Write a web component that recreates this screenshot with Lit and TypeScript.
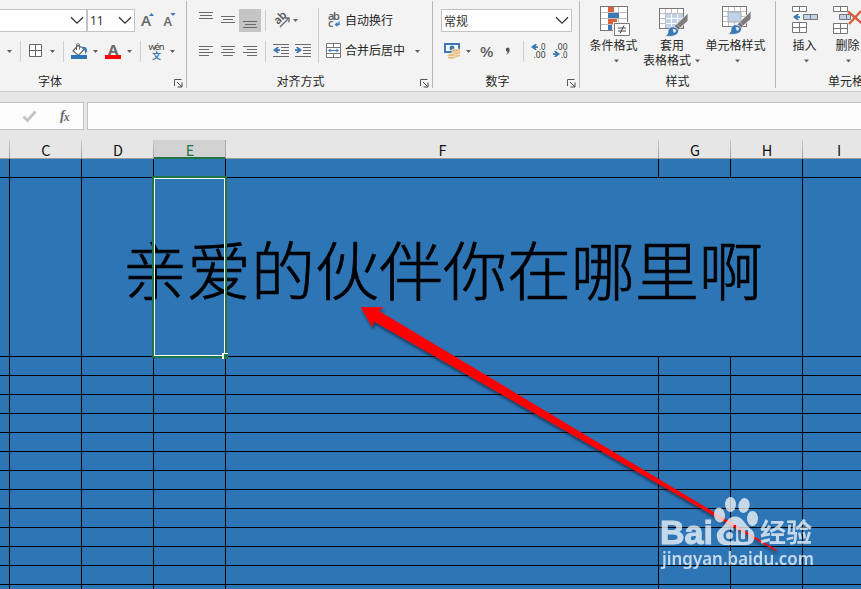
import { LitElement, html, svg, css, type TemplateResult, type SVGTemplateResult } from "lit";
import { customElement, property } from "lit/decorators.js";

const GRAY = "#6a6a6a";
const BLUE = "#3c78b4";

/** Pieces of icon artwork; all coordinates are window pixels. */
const bar = (x: number, y: number, w: number, h = 1, fill = GRAY) =>
  svg`<rect x=${x} y=${y} width=${w} height=${h} fill=${fill} shape-rendering="crispEdges"/>`;
const caret = (x: number, y: number) =>
  svg`<path d="M${x - 2.5} ${y - 1}h5l-2.5 3z" fill="#606060"/>`;
const divider = (x: number, y: number, h: number) => bar(x, y, 1, h, "#cfcfcf");
const lines = (spec: number[][]) => spec.map(([x, y, w]) => bar(x, y, w));
const arrowLeft = (x: number, y: number) =>
  svg`<path d="M${x} ${y}l4-3h2l-1.6 2.2H${x + 7}v1.7h-2.6l1.6 2.1h-2z" fill=${BLUE}/>`;
const arrowRight = (x: number, y: number) =>
  svg`<path d="M${x} ${y}l-4-3h-2l1.6 2.2h-2.6v1.7h2.6l-1.6 2.1h2z" fill=${BLUE}/>`;

/** A slice of a toolbar row; slices sit side by side. */
const slice = (x: number, y: number, w: number, h: number, body: unknown) =>
  html`<svg class="slice" width=${w} height=${h} viewBox="${x} ${y} ${w} ${h}">${body}</svg>`;

const launcher = (x: number, y: number) => svg`
  <path d="M${x + 0.5} ${y + 7}v-6.500h7" fill="none" stroke="#555"/>
  <path d="M${x + 3} ${y + 3}l4.500 4.500M${x + 8} ${y + 3.500}v4.500h-4.500" fill="none" stroke="#444"/>`;

const brush = (x: number, y: number) => svg`
  <path d="M${x + 28} ${y}v8l-8 7-4-3.500z" fill="#7d7d7d" stroke="#f3f3f3" stroke-width=".8"/>
  <path d="M${x + 16.5} ${y + 11}l4 4-2.500 2.500-4-3.500z" fill="#6c6c6c" stroke="#f3f3f3" stroke-width=".5"/>
  <path d="M${x + 14} ${y + 14}c-3-1-6 1-6 4.500 0 2.500-1.500 4-3.500 4.500 6 1 13 .5 14-4.500.3-2-1.500-4-4.500-4.500z" fill=${BLUE} stroke="#f3f3f3" stroke-width=".8"/>
  <path d="M${x + 12.5} ${y + 16.5}c2-1.500 4 0 3.500 2l-2 1.500z" fill="#e8eff6"/>`;

@customElement("excel-combo")
export class ExcelCombo extends LitElement {
  @property() value = "";
  static styles = css`
    :host { display: flex; align-items: center; justify-content: space-between; box-sizing: border-box;
      height: 23px; border: 1px solid #c3c3c3; background: #fff; padding: 0 2px 0 2px;
      font: 12px "Noto Sans", "Noto Sans CJK SC", sans-serif; color: #333; }
    svg { display: block; }
  `;
  render() {
    return html`<span>${this.value}</span>
      <svg width="14" height="9" viewBox="0 0 14 9"><path d="M1 1.200l6 6 6-6" fill="none" stroke="#333" stroke-width="1.300"/></svg>`;
  }
}

@customElement("excel-ribbon")
export class ExcelRibbon extends LitElement {
  static styles = css`
    :host { display: flex; height: 92px; box-sizing: border-box; background: #f3f3f3; border-bottom: 1px solid #cdcdcd;
      overflow: hidden; font: 12px "Noto Sans", "Noto Sans CJK SC", sans-serif; color: #262626; }
    .group { flex: none; box-sizing: border-box; display: grid; grid-template-rows: 28px 30px 24px;
      padding-top: 6px; height: 88px; border-right: 1px solid transparent;
      border-image: linear-gradient(to bottom, transparent 2px, #b8b8b8 2px) 1; }
    .font { width: 187px; }
    .align { width: 246px; }
    .number { width: 147px; }
    .style { width: 196px; grid-template-rows: 58px 24px; }
    .cells { width: 120px; grid-template-rows: 58px 24px; border: 0; }
    .row { display: flex; align-items: flex-start; white-space: nowrap; }
    .foot { display: flex; justify-content: center; position: relative; line-height: 18px; padding-top: 9px; height: 18px; }
    .font .foot { padding-right: 86px; }
    .align .foot { padding-right: 18px; }
    .number .foot { padding-right: 17px; }
    .cells .foot { justify-content: flex-start; padding-left: 52px; }
    .corner { position: absolute; right: 3px; top: 15px; }
    .slice { display: block; flex: none; }
    .face { margin: 3px 0 0 -1px; width: 88px; }
    .size { margin: 3px 0 0 0; width: 48px; }
    .format { margin: 3px 0 0 8px; width: 131px; }
    .word { width: 60px; line-height: 30px; }
    .word.merge { line-height: 34px; }
    .tall { display: flex; flex-direction: column; align-items: center; flex: none; line-height: 15px; text-align: center; white-space: nowrap; }
    .w1 { width: 67px; margin-right: -4px; }
    .w2 { width: 58px; }
    .w3 { width: 69px; }
    .w4 { width: 57px; }
    .w5 { width: 29px; }
  `;

  private group(name: string, label: string, rows: TemplateResult, corner?: [number, number]) {
    return html`<section class="group ${name}">${rows}
      <div class="foot"><span>${label}</span>
        ${corner ? html`<svg class="corner" width="9" height="9" viewBox="${corner[0]} ${corner[1]} 9 9">${launcher(corner[0], corner[1])}</svg>` : ""}
      </div></section>`;
  }

  private fontRows() {
    return html`
      <div class="row">
        <excel-combo class="face"></excel-combo>
        <excel-combo class="size" value="11"></excel-combo>
        ${slice(135, 6, 51, 28, svg`
          <text x="141" y="26" font-size="15" font-weight="600" fill=${GRAY}>A</text>
          <path d="M149 16l2.500-3 2.500 3z" fill=${BLUE}/>
          <text x="163.500" y="26" font-size="12.500" font-weight="600" fill=${GRAY}>A</text>
          <path d="M170.500 13h5l-2.500 3z" fill=${BLUE}/>`)}
      </div>
      <div class="row">
        ${slice(0, 34, 64, 30, svg`${caret(9.5, 51)}${divider(20, 41, 21)}
          <path d="M29.500 44.500h12v12h-12zM35.500 44.500v12M29.500 50.500h12" fill="#fff" stroke="#666"/>${caret(52.5, 51)}${divider(63, 41, 21)}`)}
        ${slice(64, 34, 77, 30, svg`
          <path d="M78 45.500l-5 5.500 5.500 4.500 6-6.500z" fill="#fff" stroke="#666" stroke-width="1.200"/>
          <path d="M76.500 50v-5.500q1.500-2 3 0v5" fill="none" stroke="#666"/>
          <path d="M82 47c3-1 5 1 5 3.500 0 2-1 3-2 3.500.5-3-.5-4-2-5z" fill=${BLUE}/>
          ${bar(71, 55, 16, 4, "#2e75b6")}${caret(95.5, 51)}
          <text x="108" y="55" font-size="15" font-weight="700" fill=${GRAY}>A</text>
          ${bar(105, 55, 16, 4, "#ff0000")}${caret(129.5, 51)}${divider(140, 41, 21)}`)}
        ${slice(141, 34, 45, 30, svg`
          <text x="148.500" y="50" font-size="9.500" textLength="16" fill="#444">wén</text>
          <text x="152" y="58.500" font-size="9" font-weight="700" fill=${BLUE}>文</text>${caret(172.5, 51)}`)}
      </div>`;
  }

  private alignRows() {
    return html`
      <div class="row">
        ${slice(187, 6, 132, 28, svg`
          ${lines([[199, 12, 14], [200, 15, 12], [199, 18, 14], [221, 16, 14], [223, 19, 10], [221, 22, 14]])}
          ${bar(239, 9, 22, 23, "#c5c5c5")}
          ${lines([[243, 21, 14], [245, 24, 11], [243, 27, 14]])}
          ${divider(265, 10, 21)}
          <text transform="translate(278 25) rotate(-45)" font-size="11" font-weight="600" fill="#555">ab</text>
          <path d="M280 27l8-8M284.500 18h4.500v4.500" fill="none" stroke="#666" stroke-width="1.300"/>
          ${caret(295.5, 20)}${divider(318, 8, 26)}`)}
        ${slice(319, 6, 26, 28, svg`
          <text x="328" y="20" font-size="11" font-weight="600" fill="#666" textLength="12">ab</text>
          <text x="328" y="27" font-size="10.500" font-weight="600" fill="#666">c</text>
          <path d="M339 21.500v3h-3" fill="none" stroke=${BLUE} stroke-width="1.300"/><path d="M337.500 22v5l-3-2.500z" fill=${BLUE}/>`)}
        <span class="word">自动换行</span>
      </div>
      <div class="row">
        ${slice(187, 34, 132, 30, svg`
          ${lines([[199, 46, 14], [199, 49, 10], [199, 52, 14], [199, 55, 10],
            [221, 46, 14], [223, 49, 10], [221, 52, 14], [223, 55, 10],
            [243, 46, 14], [247, 49, 10], [243, 52, 14], [247, 55, 10]])}
          ${divider(265, 41, 21)}
          ${lines([[273, 44, 16], [281, 47, 8], [281, 50, 8], [281, 53, 8], [273, 56, 16],
            [295, 44, 16], [303, 47, 8], [303, 50, 8], [303, 53, 8], [295, 56, 16]])}
          ${arrowLeft(273, 50)}${arrowRight(302, 50)}${divider(318, 34, 29)}`)}
        ${slice(319, 34, 26, 30, svg`
          <path d="M326.500 43.500h14v14h-14zM326.500 47.500h14M326.500 53.500h14M333.500 43.500v4M333.500 53.500v4" fill="#fff" stroke="#777"/>
          <path d="M329 50.500h9" stroke=${BLUE}/><path d="M328 50.500l2.500-2v4zM339 50.500l-2.500-2v4z" fill=${BLUE}/>`)}
        <span class="word merge">合并后居中</span>
        ${slice(405, 34, 27, 30, caret(417.5, 51))}
      </div>`;
  }

  private numberRows() {
    return html`
      <div class="row"><excel-combo class="format" value="常规"></excel-combo></div>
      <div class="row">
        ${slice(433, 34, 146, 30, svg`
          <path d="M445 44h14v8h-14z" fill="#fff" stroke=${BLUE} stroke-width="2"/>
          <circle cx="452" cy="48" r="2.500" fill=${BLUE}/>
          <g fill="#e8bd7c" stroke="#f3f3f3" stroke-width=".6"><ellipse cx="456" cy="55.500" rx="4.500" ry="1.800"/><ellipse cx="456" cy="53" rx="4.500" ry="1.800"/><ellipse cx="456" cy="50.500" rx="4.500" ry="1.800"/>
          <ellipse cx="451.500" cy="57.500" rx="4" ry="1.600"/><ellipse cx="451.500" cy="55" rx="4" ry="1.600"/></g>
          ${caret(468.5, 51)}
          <text x="480" y="57" font-size="15" font-weight="500" fill="#555" textLength="13.500" lengthAdjust="spacingAndGlyphs">%</text>
          <path d="M507.500 47.500a2.200 2.200 0 0 1 2.200 2.300q0 3.500-3.700 5.200 1.700-1.700 1.600-3.200a2.200 2.200 0 0 1-.1-4.300z" fill="#555"/>
          ${divider(523, 41, 21)}
          <g font-size="9" fill="#333"><text x="539" y="50" textLength="6.500" lengthAdjust="spacingAndGlyphs">.0</text><text x="533.500" y="57.500" textLength="12" lengthAdjust="spacingAndGlyphs">.00</text>
          <text x="555.500" y="50" textLength="12" lengthAdjust="spacingAndGlyphs">.00</text><text x="561" y="57.500" textLength="6.500" lengthAdjust="spacingAndGlyphs">.0</text></g>
          ${arrowLeft(531, 47)}${arrowRight(560, 54)}`)}
      </div>`;
  }

  private tableGrid(x: number, y: number, cols: number, rows: number, cw: number, ch: number): SVGTemplateResult {
    const v = Array.from({ length: cols - 1 }, (_, i) => bar(x + (i + 1) * cw, y + 1, 1, rows * ch - 1, "#bdbdbd"));
    const h = Array.from({ length: rows - 1 }, (_, i) => bar(x + 1, y + (i + 1) * ch, cols * cw - 1, 1, "#bdbdbd"));
    return svg`<rect x=${x + 0.5} y=${y + 0.5} width=${cols * cw} height=${rows * ch} fill="#fff" stroke="#777"/>${v}${h}`;
  }

  private styleRows() {
    return html`<div class="row">
      <div class="tall w1">
        ${slice(580, 6, 67, 32, svg`
          ${this.tableGrid(600, 6, 3, 4, 9, 6)}
          ${bar(608, 7, 6, 5, "#d9603b")}${bar(608, 13, 11, 5, BLUE)}${bar(608, 19, 9, 5, "#d9603b")}${bar(608, 25, 4, 5, BLUE)}
          <path d="M614.500 23.500h15v12h-15z" fill="#fff" stroke="#f3f3f3" stroke-width="3"/>
          <path d="M614.500 23.500h15v12h-15z" fill="#fff" stroke="#777"/>
          <path d="M618 28h8M618 31h8M624 25.500l-4 8" stroke="#444" fill="none"/>`)}
        <span>条件格式</span>${slice(580, 53, 67, 10, caret(616.5, 60.5))}
      </div>
      <div class="tall w2">
        ${slice(643, 6, 58, 32, svg`${this.tableGrid(659, 8, 4, 4, 6, 5)}
          ${bar(666, 14, 17, 14, "#c0d2e8")}${bar(671, 14, 1, 14, "#fff")}${bar(677, 14, 1, 14, "#fff")}${bar(666, 18, 17, 1, "#fff")}${bar(666, 23, 17, 1, "#fff")}
          ${brush(660, 13)}`)}
        <span>套用</span>
        <div class="row"><span>表格格式</span>${slice(691, 53, 10, 15, caret(697.5, 60.5))}</div>
      </div>
      <div class="tall w3">
        ${slice(701, 6, 69, 32, svg`${this.tableGrid(722, 6, 4, 4, 6, 5)}
          <rect x="728" y="12" width="13" height="10" fill="#c0d2e8" stroke="#aaa"/>
          ${brush(723, 11)}`)}
        <span>单元格样式</span>${slice(701, 53, 69, 10, caret(737.5, 60.5))}
      </div>
    </div>`;
  }

  private cellRows() {
    return html`<div class="row">
      <div class="tall w4">
        ${slice(776, 6, 57, 32, svg`
          <path d="M792.500 6.500h14v5h-14zM799.500 6.500v5M792.500 22.500h14v10h-14zM792.500 27.500h14M799.500 22.500v10" fill="#fff" stroke="#777"/>
          <path d="M803.500 14.500h14v5h-14zM810.500 14.500v5" fill="#c0d2e8" stroke="#777"/>${arrowLeft(793, 17)}`)}
        <span>插入</span>${slice(776, 53, 57, 10, caret(806.5, 60.5))}
      </div>
      <div class="tall w5">
        ${slice(833, 6, 29, 32, svg`
          <path d="M833.500 6.500h14v5h-14zM840.500 6.500v5M833.500 23.500h14v10h-14zM833.500 28.500h14M840.500 23.500v10" fill="#fff" stroke="#777"/>
          <path d="M839.500 14.500h11v5h-11zM846.500 14.500v5" fill="#c0d2e8" stroke="#777"/>
          <path d="M848 11.500l14 12M861 11l-12 13" stroke="#d9603b" stroke-width="2.400" fill="none"/>`)}
        <span>删除</span>${slice(833, 53, 29, 10, caret(848.5, 60.5))}
      </div>
    </div>`;
  }

  render() {
    return html`
      ${this.group("font", "字体", this.fontRows(), [175, 79])}
      ${this.group("align", "对齐方式", this.alignRows(), [421, 79])}
      ${this.group("number", "数字", this.numberRows(), [568, 79])}
      ${this.group("style", "样式", this.styleRows())}
      ${this.group("cells", "单元格", this.cellRows())}`;
  }
}

@customElement("excel-sheet")
export class ExcelSheet extends LitElement {
  static styles = css`
    :host { display: block; position: relative; }
    .grid { display: grid; grid-template-columns: 10px 72px 72px 72px 433px 72px 72px 72px; }
    .heads { height: 19px; background: #e6e6e6; }
    .head { box-sizing: border-box; height: 19px; border-bottom: 1px solid #999; border-right: 1px solid transparent;
      border-image: linear-gradient(to bottom, #d0d0d0, #999) 1; border-top: 0; border-left: 0;
      padding-left: 1px; font: 14.5px/20px "Noto Sans CJK SC", sans-serif; text-align: center; color: #111; }
    .head.on { background: #d2d2d2; border-image: none; border-right-color: #aaa; border-bottom: 2px solid #217346; color: #217346; }
    .row { height: 19px; }
    .row.merged { height: 179px; }
    .cell { box-sizing: border-box; border-right: 1px solid #000; border-bottom: 1px solid #000; background: #2e75b6; }
    .title { grid-column: 3 / 8; display: flex; align-items: center; justify-content: center; white-space: nowrap; padding-left: 2px;
      font: 64px/80px "Noto Sans CJK SC", sans-serif; font-weight: 300; color: #000; -webkit-text-stroke: .7px #000; }
    .selection { position: absolute; left: 152px; top: 36px; width: 75px; height: 182px; box-sizing: border-box;
      border: 2px solid #217346; outline: 1px solid #fff; outline-offset: -3px; }
    .handle { position: absolute; left: 222px; top: 213px; width: 6px; height: 6px; box-sizing: border-box;
      background: #217346; border-left: 2px solid #fff; border-top: 1px solid #fff; }
    .overlay { position: absolute; left: 0; top: 0; }
  `;
  render() {
    const heads = ["", "C", "D", "E", "F", "G", "H", "I"];
    const plain = html`<div class="grid row">${heads.map(() => html`<div class="cell"></div>`)}</div>`;
    return html`
      <div class="grid heads">${heads.map((h) => html`<div class="head ${h === "E" ? "on" : ""}">${h}</div>`)}</div>
      ${plain}
      <div class="grid row merged">
        <div class="cell"></div><div class="cell"></div>
        <div class="cell title">亲爱的伙伴你在哪里啊</div>
        <div class="cell"></div>
      </div>
      ${Array.from({ length: 13 }, () => plain)}
      <div class="selection"></div><div class="handle"></div>
      <svg class="overlay" width="861" height="449" viewBox="0 140 861 449">
        <defs>
          <filter id="shade" x="-5%" y="-5%" width="110%" height="115%"><feDropShadow dx="1" dy="3" stdDeviation="1.500" flood-color="#000" flood-opacity=".5"/></filter>
          <mask id="du" maskUnits="userSpaceOnUse" x="700" y="500" width="80" height="60">
            <rect x="700" y="500" width="80" height="60" fill="#fff"/>
            <g fill="none" stroke="#000" stroke-width="2.600"><circle cx="729.500" cy="535.500" r="4.800"/><path d="M734.800 525v16.500M739.500 530v7.500q0 3.200 3.500 3.200t3.500-3.200v-7.500M746.800 530v11.500"/></g>
          </mask>
        </defs>
        <path d="M360.500 307l23.500.3-5.300 3.400L777 550l-.8 1.200L374 321.500l-1.700 5.500z" fill="#f00" filter="url(#shade)"/>
        <g fill="#fff" opacity=".73" font-family="'Noto Sans', 'Noto Sans CJK SC', sans-serif">
          <text x="660" y="543.500" font-family="'Liberation Sans', sans-serif" font-size="34" font-weight="700" textLength="53" lengthAdjust="spacingAndGlyphs" stroke="#fff" stroke-width="1">Bai</text>
          <ellipse cx="719.500" cy="515" rx="5.500" ry="7.500" transform="rotate(-8 719.500 515)"/>
          <ellipse cx="730.500" cy="504.500" rx="5.500" ry="7.500"/>
          <ellipse cx="744" cy="505.500" rx="5.500" ry="7.500" transform="rotate(12 744 505.500)"/>
          <ellipse cx="752.500" cy="518.500" rx="5.500" ry="7.500"/>
          <path mask="url(#du)" d="M735 516.500c-7 0-8 6-12 10-4 3-7 6-6 11s4 7.500 9 7.500h20c5 0 8.500-3.500 8.500-8.500s-3-7-6.500-10c-4-4-6-10-13-10z"/>
          <text x="760" y="542" font-size="26" font-weight="700" textLength="52">经验</text>
          <text x="662" y="564.500" font-size="18" font-weight="600" textLength="152" lengthAdjust="spacingAndGlyphs">jingyan.baidu.com</text>
        </g>
      </svg>`;
  }
}

@customElement("app-root")
export class AppRoot extends LitElement {
  static styles = css`
    :host { display: flex; flex-direction: column; width: 861px; height: 589px; overflow: hidden; background: #e6e6e6; }
    .formula { display: flex; gap: 3px; height: 28px; margin: 10px 0; flex: none; }
    .tools, .entry { box-sizing: border-box; background: #fdfdfd; border: 1px solid #c3c3c3; }
    .tools { width: 84px; border-left: 0; display: flex; }
    .entry { flex: 1; border-right: 0; }
    svg { display: block; }
    excel-ribbon, excel-sheet { flex: none; }
  `;
  render() {
    return html`
      <excel-ribbon></excel-ribbon>
      <div class="formula">
        <div class="tools"><svg width="83" height="26" viewBox="0 103 83 26">
          <path d="M23.500 116.500l4 4 8-9" fill="none" stroke="#c4c4c4" stroke-width="2.800"/>
          <text x="60" y="120" font-family="'Liberation Serif', serif" font-style="italic" font-weight="700" font-size="14" fill="#666">f<tspan font-size="11.500" dx="-1" dy="1">x</tspan></text>
        </svg></div>
        <div class="entry"></div>
      </div>
      <excel-sheet></excel-sheet>`;
  }
}
